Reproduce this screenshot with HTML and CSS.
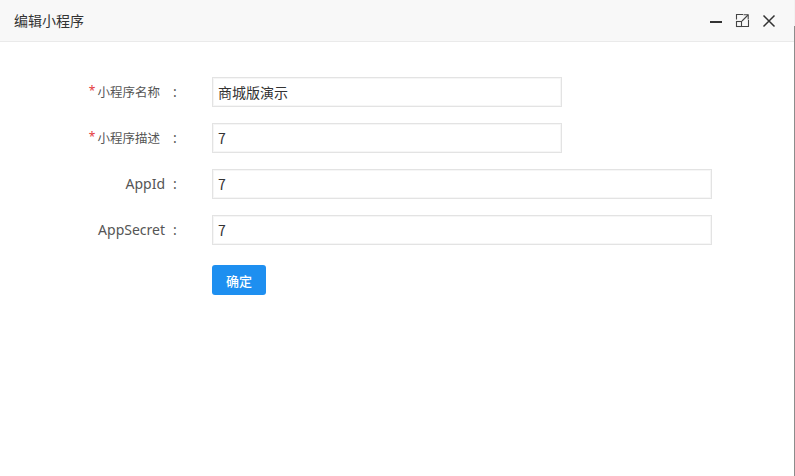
FILE: index.html
```html
<!DOCTYPE html>
<html lang="zh">
<head>
<meta charset="utf-8">
<title>编辑小程序</title>
<link rel="stylesheet" href="styles.css">
</head>
<body>
<div class="window">
  <div class="main">
    <div class="titlebar">
      <span class="title">编辑小程序</span>
      <div class="controls">
        <svg class="ico" width="14" height="14" viewBox="0 0 14 14"><path d="M1 8 H13" stroke="#333" stroke-width="2" fill="none"/></svg>
        <svg class="ico" width="15" height="15" viewBox="0 0 15 15" fill="none" stroke="#444" stroke-width="1.1"><path d="M1.5 6.5 V1.5 H8"/><path d="M13.5 7 V13.5 H7"/><rect x="1.5" y="8.5" width="5" height="5"/><path d="M7 8 L13 2"/><path d="M8.5 1.8 H13.2 V6.5"/></svg>
        <svg class="ico" width="14" height="14" viewBox="0 0 14 14" fill="none" stroke="#333" stroke-width="1.5"><path d="M1.5 1.5 L12.5 12.5 M12.5 1.5 L1.5 12.5"/></svg>
      </div>
    </div>
    <form class="form">
      <div class="row">
        <label class="label"><span class="req">*</span><span class="cjk">小程序名称</span><span class="colon">:</span></label>
        <input class="input short" type="text" value="商城版演示">
      </div>
      <div class="row">
        <label class="label"><span class="req">*</span><span class="cjk">小程序描述</span><span class="colon">:</span></label>
        <input class="input short" type="text" value="7">
      </div>
      <div class="row">
        <label class="label"><span>AppId</span><span class="colon">:</span></label>
        <input class="input long" type="text" value="7">
      </div>
      <div class="row">
        <label class="label"><span>AppSecret</span><span class="colon">:</span></label>
        <input class="input long" type="text" value="7">
      </div>
      <div class="row btnrow">
        <div class="label"></div>
        <button class="btn" type="button">确定</button>
      </div>
    </form>
  </div>
  <div class="edge"></div>
</div>
</body>
</html>
```

FILE: styles.css
```css
html, body {
  margin: 0;
  padding: 0;
  background: #fff;
}
body {
  font-family: "Noto Sans", "Noto Sans CJK SC", sans-serif;
  color: #333;
  width: 795px;
  height: 476px;
  overflow: hidden;
}
.window {
  display: flex;
  height: 476px;
}
.main {
  width: 794px;
  display: flex;
  flex-direction: column;
}
.edge {
  width: 1px;
  background: linear-gradient(#f2f2f2 0, #f2f2f2 26px, #8c8c8c 26px);
}
.titlebar {
  height: 41px;
  background: #f8f8f8;
  border-bottom: 1px solid #eaeaea;
  display: flex;
  align-items: center;
  justify-content: space-between;
  padding: 0 18px 0 14px;
}
.title {
  font-family: "Noto Sans CJK SC", sans-serif;
  font-size: 14px;
  color: #333;
  margin-top: -2px;
}
.controls {
  display: flex;
  align-items: center;
  gap: 12px;
}
.ico {
  display: block;
}
.form {
  margin: 35px 0 0 0;
  display: flex;
  flex-direction: column;
  gap: 16px;
}
.row {
  display: flex;
  align-items: center;
  height: 30px;
}
.btnrow {
  margin-top: 4px;
}
.label {
  width: 182px;
  margin-right: 30px;
  display: flex;
  justify-content: flex-end;
  align-items: center;
  font-size: 14px;
  color: #555;
  line-height: 30px;
}
.req {
  color: #e4393c;
  font-size: 12px;
  margin-right: 2px;
  position: relative;
  top: -1px;
}
.cjk {
  font-family: "Noto Sans CJK SC", sans-serif;
  font-size: 12.5px;
  margin-right: 5px;
}
.colon {
  margin-left: 8px;
  width: 9px;
}
.input {
  box-sizing: border-box;
  height: 30px;
  border: 1px solid #e3e3e3;
  box-shadow: inset 0 0 0 1px #f6f6f6;
  padding: 0 5px;
  font-family: "Noto Sans CJK SC", "Noto Sans", sans-serif;
  font-size: 14px;
  color: #333;
  background: #fff;
  outline: none;
  margin: 0;
}
.short { width: 350px; }
.long { width: 500px; }
.btn {
  width: 54px;
  height: 30px;
  border: none;
  border-radius: 3px;
  background: #1e8ff0;
  color: #fff;
  font-family: "Noto Sans CJK SC", sans-serif;
  font-size: 13px;
  font-weight: 500;
  padding: 0;
  cursor: pointer;
}
```
